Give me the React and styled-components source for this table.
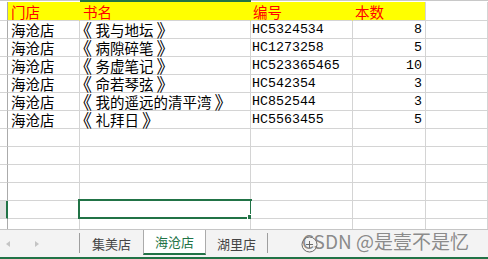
import React from "react";
import styled, { createGlobalStyle } from "styled-components";

const GlobalStyle = createGlobalStyle`
  html, body {
    margin: 0;
    padding: 0;
    background: #fff;
    overflow: hidden;
  }
  body {
    font-family: "Noto Sans CJK SC", "Liberation Sans", sans-serif;
  }
`;

const GRID = "#d4d4d4";
const GREEN = "#217346";

const Page = styled.div`
  width: 488px;
  height: 259px;
  display: flex;
  flex-direction: column;
  overflow: hidden;
`;

const Sheet = styled.div`
  height: 229px;
  overflow: hidden;
  display: grid;
  grid-template-columns: 8px 72px 171px 102px 73px 1fr;
  grid-template-rows: 2px 19px;
  grid-auto-rows: 18px;
`;

const Edge = styled.div`
  border-top: 1px solid ${(p) => (p.$active ? GREEN : "#c8c8c8")};
  border-bottom: 1px solid ${(p) => (p.$active ? GREEN : "#fff")};
  box-sizing: border-box;
`;

const RowHead = styled.div`
  box-sizing: border-box;
  border-bottom: 1px solid ${GRID};
  border-right: ${(p) => (p.$selected ? `2px solid ${GREEN}` : "1px solid #ababab")};
  background: ${(p) => (p.$selected ? "#e1e1e1" : "#fff")};
`;

const Cell = styled.div`
  position: relative;
  box-sizing: border-box;
  border-bottom: 1px solid ${GRID};
  border-right: 1px solid ${(p) => (p.$fill && !p.$edge ? "#ffff00" : GRID)};
  background: ${(p) => (p.$fill ? "#ffff00" : "#fff")};
  color: ${(p) => (p.$fill ? "#ff0000" : "#000")};
  font-size: 14.5px;
  line-height: 17px;
  white-space: nowrap;
  display: flex;
  align-items: center;
  justify-content: ${(p) => (p.$right ? "flex-end" : "flex-start")};
  padding: ${(p) => (p.$right ? "0 3px 0 0" : `0 0 0 ${p.$pad ?? 3}px`)};
`;

const Code = styled.span`
  font-family: "Liberation Mono", monospace;
  font-size: 13.3px;
`;

const Bracket = styled.span`
  display: inline-block;
  width: 14.5px;
  font-size: 18px;
  vertical-align: -1px;
  text-indent: ${(p) => (p.$close ? "3px" : "-7px")};
`;

const Selection = styled.div`
  position: absolute;
  left: -2px;
  top: -2px;
  right: -2px;
  bottom: -1px;
  border: 2px solid ${GREEN};
  pointer-events: none;
  &::after {
    content: "";
    position: absolute;
    right: -4px;
    bottom: -4px;
    width: 5px;
    height: 5px;
    background: ${GREEN};
    border: 1px solid #fff;
  }
`;

const TabBar = styled.div`
  height: 30px;
  box-sizing: border-box;
  border-top: 1px solid #c6c6c6;
  border-bottom: 2px solid ${GREEN};
  background: #f3f3f3;
  display: flex;
  align-items: flex-start;
  position: relative;
`;

const Nav = styled.div`
  width: 79px;
  height: 27px;
  display: flex;
  align-items: center;
  gap: 25px;
  padding-left: 6px;
  box-sizing: border-box;
`;

const Arrow = styled.span`
  width: 0;
  height: 0;
  border-top: 3.5px solid transparent;
  border-bottom: 3.5px solid transparent;
  ${(p) =>
    p.$left
      ? "border-right: 4px solid #c4c4c4;"
      : "border-left: 4px solid #c4c4c4;"}
`;

const Sep = styled.span`
  width: 1px;
  height: 20px;
  margin-top: 3px;
  background: #9e9e9e;
`;

const Tab = styled.div`
  box-sizing: border-box;
  width: ${(p) => p.$w}px;
  height: ${(p) => (p.$active ? "25px" : "26px")};
  display: flex;
  align-items: center;
  justify-content: center;
  font-size: 13px;
  color: ${(p) => (p.$active ? GREEN : "#444")};
  background: ${(p) => (p.$active ? "#fff" : "transparent")};
  ${(p) =>
    p.$active &&
    `border-left: 1px solid #ababab;
     border-right: 1px solid #ababab;
     border-bottom: 2px solid ${GREEN};`}
`;

const AddButton = styled.div`
  margin-left: 33px;
  margin-top: 6px;
  width: 17px;
  height: 17px;
  display: flex;
`;

const Watermark = styled.div`
  position: absolute;
  left: 302px;
  top: -2px;
  font-family: "Noto Sans CJK SC", sans-serif;
  font-size: 19px;
  line-height: 26px;
  color: rgba(110, 110, 110, 0.8);
  white-space: nowrap;
  pointer-events: none;
`;

const header = ["门店", "书名", "编号", "本数"];

const rows = [
  ["海沧店", "我与地坛", "HC5324534", 8],
  ["海沧店", "病隙碎笔", "HC1273258", 5],
  ["海沧店", "务虚笔记", "HC523365465", 10],
  ["海沧店", "命若琴弦", "HC542354", 3],
  ["海沧店", "我的遥远的清平湾", "HC852544", 3],
  ["海沧店", "礼拜日", "HC5563455", 5],
];

const emptyRows = 6;

function BookTitle({ name }) {
  return (
    <>
      <Bracket>《</Bracket>
      {name}
      <Bracket $close>》</Bracket>
    </>
  );
}

function App() {
  return (
    <Page>
      <GlobalStyle />
      <Sheet>
        <Edge />
        <Edge />
        <Edge $active />
        <Edge />
        <Edge />
        <Edge />

        <RowHead />
        <Cell $fill>{header[0]}</Cell>
        <Cell $fill>{header[1]}</Cell>
        <Cell $fill $pad={2}>{header[2]}</Cell>
        <Cell $fill $edge $pad={2}>{header[3]}</Cell>
        <Cell />

        {rows.map((r, i) => (
          <React.Fragment key={i}>
            <RowHead />
            <Cell>{r[0]}</Cell>
            <Cell $pad={1}>
              <BookTitle name={r[1]} />
            </Cell>
            <Cell $pad={1}>
              <Code>{r[2]}</Code>
            </Cell>
            <Cell $right>
              <Code>{r[3]}</Code>
            </Cell>
            <Cell />
          </React.Fragment>
        ))}

        {Array.from({ length: emptyRows }).map((_, i) => (
          <React.Fragment key={"e" + i}>
            <RowHead $selected={i === 4} />
            <Cell />
            <Cell>{i === 4 && <Selection />}</Cell>
            <Cell />
            <Cell />
            <Cell />
          </React.Fragment>
        ))}
      </Sheet>

      <TabBar>
        <Nav>
          <Arrow $left />
          <Arrow />
        </Nav>
        <Sep />
        <Tab $w={63}>集美店</Tab>
        <Tab $w={63} $active>
          海沧店
        </Tab>
        <Tab $w={61}>湖里店</Tab>
        <Sep />
        <AddButton>
          <svg width="17" height="17" viewBox="0 0 17 17">
            <circle cx="8.5" cy="8.5" r="7.5" fill="none" stroke="#6a6a6a" strokeWidth="1" />
            <path d="M8.5 5v7M5 8.5h7" stroke="#6a6a6a" strokeWidth="1" />
          </svg>
        </AddButton>
        <Watermark>CSDN @是壹不是忆</Watermark>
      </TabBar>
    </Page>
  );
}

export default App;
